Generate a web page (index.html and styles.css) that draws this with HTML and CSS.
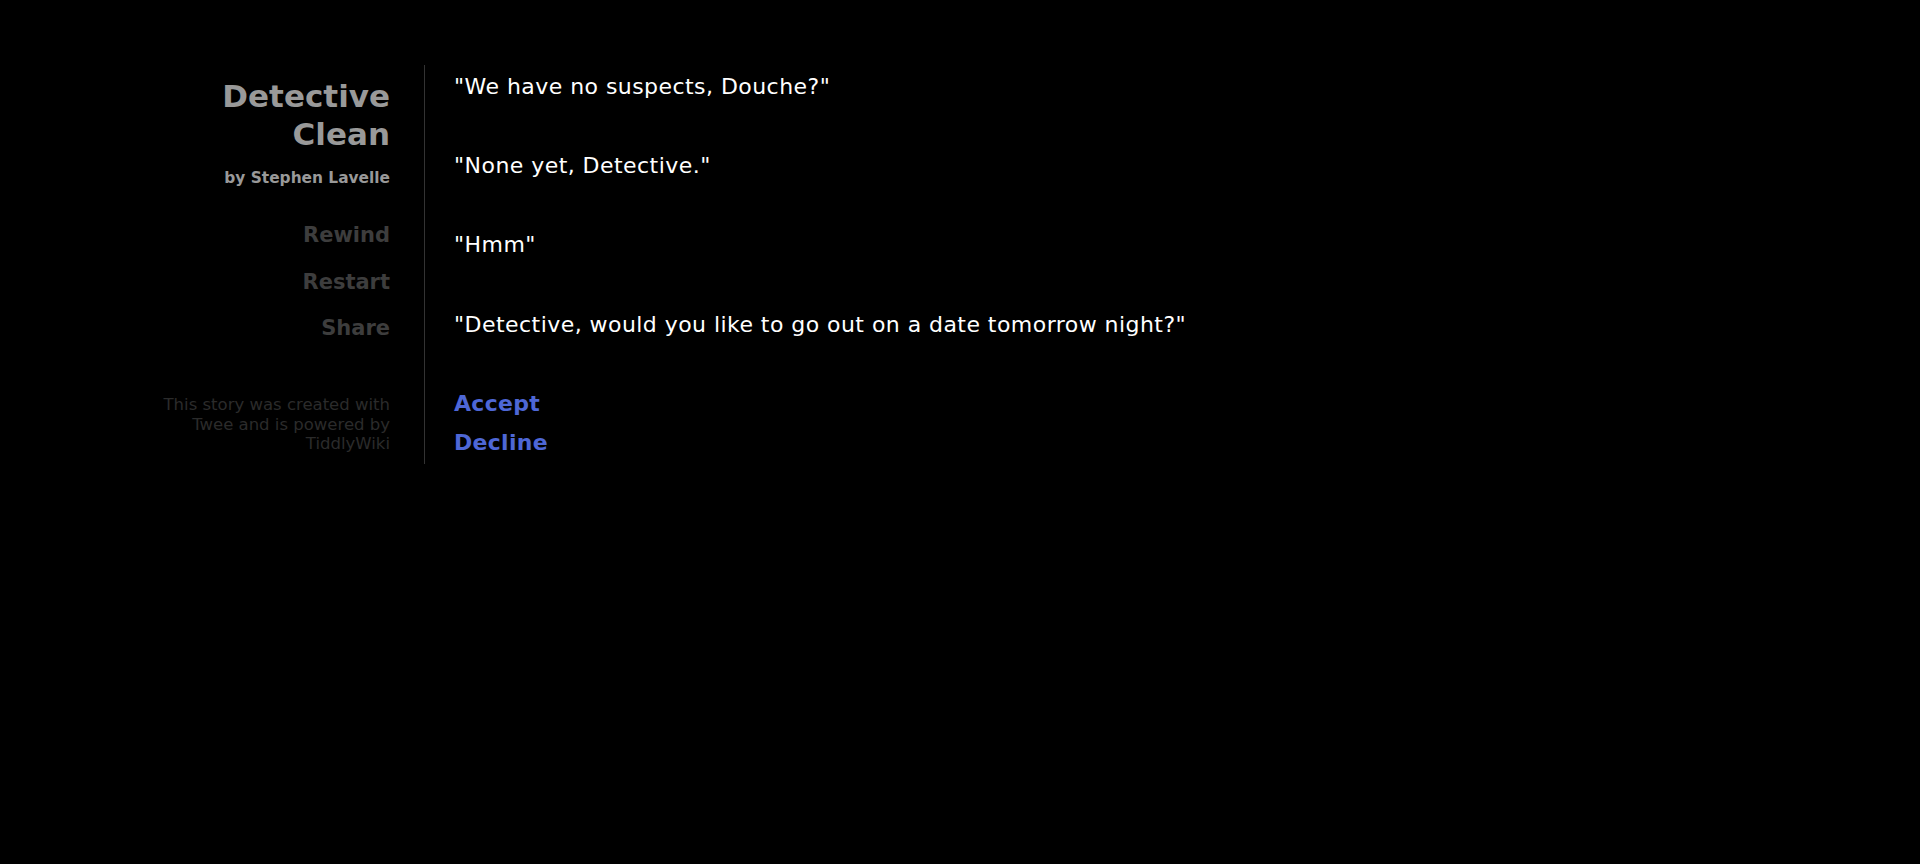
FILE: index.html
```
<!DOCTYPE html>
<html>
<head>
<meta charset="utf-8">
<title>Detective Clean</title>
<link rel="stylesheet" href="styles.css">
</head>
<body>
<div class="page">
  <div class="sidebar">
    <h1 class="title">Detective Clean</h1>
    <div class="author">by Stephen Lavelle</div>
    <ul class="menu">
      <li>Rewind</li>
      <li>Restart</li>
      <li>Share</li>
    </ul>
    <div class="credits">This story was created with Twee and is powered by TiddlyWiki</div>
  </div>
  <div class="passages">
    <div class="passage">
      <p>"We have no suspects, Douche?"</p>
      <p>"None yet, Detective."</p>
      <p>"Hmm"</p>
      <p>"Detective, would you like to go out on a date tomorrow night?"</p>
      <div class="links">
        <a class="link">Accept</a>
        <a class="link">Decline</a>
      </div>
    </div>
  </div>
</div>
</body>
</html>
```

FILE: styles.css
```
html, body {
  margin: 0;
  padding: 0;
  background: #000;
  height: 100%;
}
body {
  font-family: "DejaVu Sans", Verdana, sans-serif;
  color: #fff;
}
.page {
  display: flex;
  align-items: flex-start;
  padding-top: 65px;
}
.sidebar {
  width: 240px;
  margin-left: 150px;
  margin-right: 34px;
  text-align: right;
  font-weight: bold;
}
.title {
  margin: 12px 0 0;
  font-size: 31px;
  line-height: 38px;
  color: #999;
  font-weight: bold;
}
.author {
  margin-top: 15px;
  font-size: 15.4px;
  line-height: 20px;
  color: #999;
}
.menu {
  list-style: none;
  margin: 24px 0 0;
  padding: 0;
  font-size: 21px;
  color: #3d3d3d;
}
.menu li {
  line-height: 46px;
}
.menu li:first-child {
  margin-bottom: 1px;
}
.credits {
  margin-top: 44px;
  font-weight: normal;
  font-size: 16.5px;
  line-height: 19.5px;
  color: #2b2b2b;
}
.passages {
  border-left: 1px solid #333;
  padding-left: 29px;
  padding-top: 2px;
}
.passage {
  font-size: 22px;
  letter-spacing: 0.45px;
  line-height: 39.6px;
}
.passage p {
  margin: 0 0 39.6px;
}
.links {
  display: flex;
  flex-direction: column;
  align-items: flex-start;
  padding-bottom: 1px;
}
.link {
  color: #4e67d6;
  font-weight: bold;
  letter-spacing: 0.3px;
  cursor: pointer;
}
```
